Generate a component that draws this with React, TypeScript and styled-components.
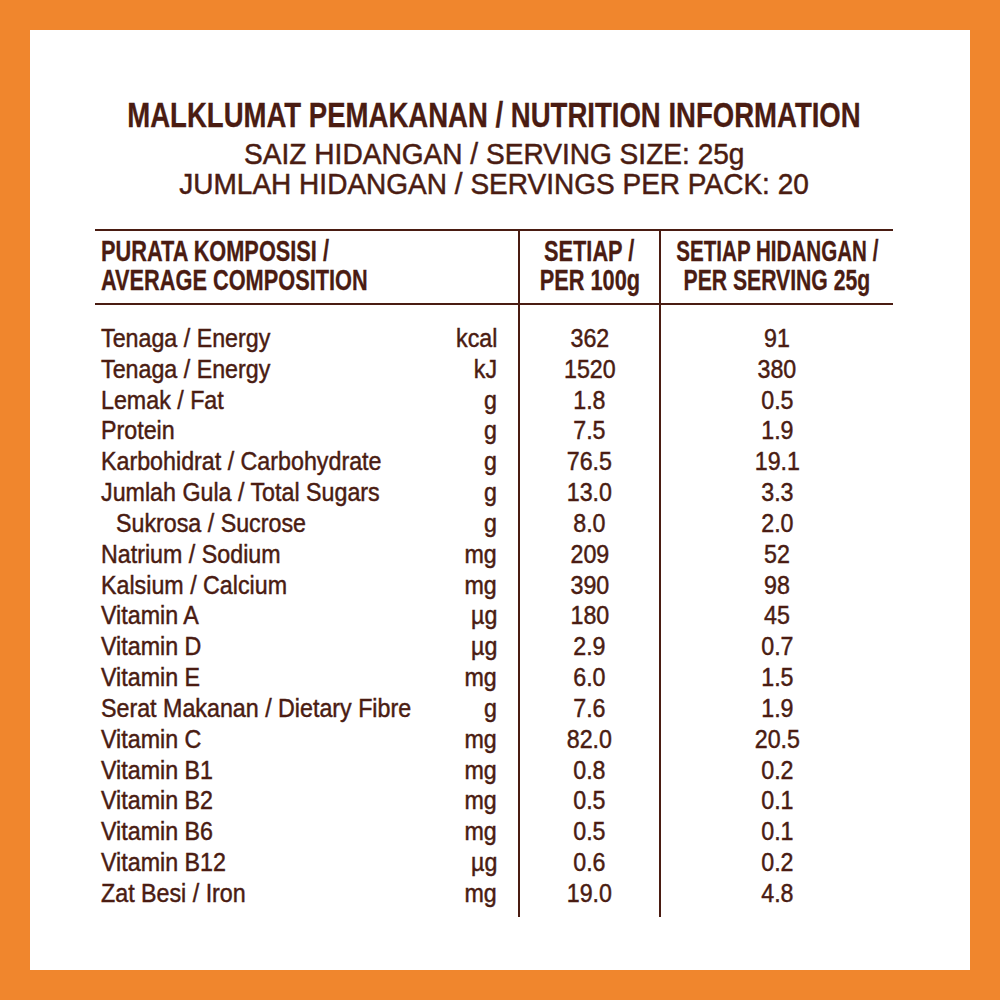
import React from 'react';
import styled, { createGlobalStyle } from 'styled-components';

// --- Global ---

const BROWN = '#4a1c12';

const GlobalStyle = createGlobalStyle`
  html, body {
    margin: 0;
    padding: 0;
  }
  body {
    font-family: "Liberation Sans", Arial, sans-serif;
    color: ${BROWN};
  }
`;

// --- Styled Components ---

const Frame = styled.div`
  width: 1000px;
  height: 1000px;
  box-sizing: border-box;
  padding: 30px;
  background: #f0862d;
`;

const Panel = styled.div`
  height: 100%;
  background: #ffffff;
  padding: 65px 0 0 65px;
  box-sizing: border-box;
  overflow: hidden;
`;

const Content = styled.div`
  width: 798px;
`;

// the label face is a condensed grotesque; squeeze Liberation Sans to match it
const Squeeze = styled.span<{ $s: number; $origin?: string }>`
  display: inline-block;
  white-space: nowrap;
  transform: scaleX(${p => p.$s});
  transform-origin: ${p => p.$origin ?? 'center'};
`;

const Heading = styled.div`
  display: flex;
  flex-direction: column;
  align-items: center;
  margin-bottom: 30px;
`;

const Title = styled.h1`
  margin: 0 0 4px;
  font-size: 35px;
  line-height: 40px;
  font-weight: 700;
  -webkit-text-stroke: 0.3px currentColor;
`;

const SubTitle = styled.div`
  font-size: 30px;
  line-height: 30px;
  -webkit-text-stroke: 0.5px currentColor;
`;

const Table = styled.div`
  border-top: 2px solid ${BROWN};
`;

const Row = styled.div`
  display: grid;
  grid-template-columns: 423px 141px 234px;
`;

const HeadRow = styled(Row)`
  border-bottom: 2px solid ${BROWN};
  font-weight: 700;
  font-size: 29px;
  line-height: 29px;
  -webkit-text-stroke: 0.3px currentColor;
`;

const HeadCell = styled.div<{ $center?: boolean }>`
  display: flex;
  flex-direction: column;
  align-items: ${p => (p.$center ? 'center' : 'flex-start')};
  padding: 6px ${p => (p.$center ? '0' : '6px')} 8px;
  border-left: ${p => (p.$center ? `2px solid ${BROWN}` : 'none')};
`;

const Body = styled(Row)`
  font-size: 25px;
  line-height: 30.83px;
  -webkit-text-stroke: 0.45px currentColor;
`;

const Column = styled.div<{ $line?: boolean }>`
  padding: 18px 0 8px;
  border-left: ${p => (p.$line ? `2px solid ${BROWN}` : 'none')};
  text-align: center;
`;

const LabelRow = styled.div`
  display: flex;
  justify-content: space-between;
  padding: 0 21px 0 6px;
`;

const Label = styled.span<{ $indent?: boolean }>`
  padding-left: ${p => (p.$indent ? '15px' : '0')};
`;

// --- Data ---

type Item = { label: string; unit: string; per100: string; perServing: string; indent?: boolean };

const items: Item[] = [
  { label: 'Tenaga / Energy', unit: 'kcal', per100: '362', perServing: '91' },
  { label: 'Tenaga / Energy', unit: 'kJ', per100: '1520', perServing: '380' },
  { label: 'Lemak / Fat', unit: 'g', per100: '1.8', perServing: '0.5' },
  { label: 'Protein', unit: 'g', per100: '7.5', perServing: '1.9' },
  { label: 'Karbohidrat / Carbohydrate', unit: 'g', per100: '76.5', perServing: '19.1' },
  { label: 'Jumlah Gula / Total Sugars', unit: 'g', per100: '13.0', perServing: '3.3' },
  { label: 'Sukrosa / Sucrose', unit: 'g', per100: '8.0', perServing: '2.0', indent: true },
  { label: 'Natrium / Sodium', unit: 'mg', per100: '209', perServing: '52' },
  { label: 'Kalsium / Calcium', unit: 'mg', per100: '390', perServing: '98' },
  { label: 'Vitamin A', unit: 'µg', per100: '180', perServing: '45' },
  { label: 'Vitamin D', unit: 'µg', per100: '2.9', perServing: '0.7' },
  { label: 'Vitamin E', unit: 'mg', per100: '6.0', perServing: '1.5' },
  { label: 'Serat Makanan / Dietary Fibre', unit: 'g', per100: '7.6', perServing: '1.9' },
  { label: 'Vitamin C', unit: 'mg', per100: '82.0', perServing: '20.5' },
  { label: 'Vitamin B1', unit: 'mg', per100: '0.8', perServing: '0.2' },
  { label: 'Vitamin B2', unit: 'mg', per100: '0.5', perServing: '0.1' },
  { label: 'Vitamin B6', unit: 'mg', per100: '0.5', perServing: '0.1' },
  { label: 'Vitamin B12', unit: 'µg', per100: '0.6', perServing: '0.2' },
  { label: 'Zat Besi / Iron', unit: 'mg', per100: '19.0', perServing: '4.8' },
];

const BODY_S = 0.93;
const HEAD_S = 0.75;

// --- Component ---

export default function App() {
  return (
    <>
      <GlobalStyle />
      <Frame>
        <Panel>
          <Content>
            <Heading>
              <Title>
                <Squeeze $s={0.787}>MALKLUMAT PEMAKANAN / NUTRITION INFORMATION</Squeeze>
              </Title>
              <SubTitle>
                <Squeeze $s={0.936}>SAIZ HIDANGAN / SERVING SIZE: 25g</Squeeze>
              </SubTitle>
              <SubTitle>
                <Squeeze $s={0.934}>JUMLAH HIDANGAN / SERVINGS PER PACK: 20</Squeeze>
              </SubTitle>
            </Heading>

            <Table>
              <HeadRow>
                <HeadCell>
                  <Squeeze $s={HEAD_S} $origin="left">PURATA KOMPOSISI /</Squeeze>
                  <Squeeze $s={HEAD_S} $origin="left">AVERAGE COMPOSITION</Squeeze>
                </HeadCell>
                <HeadCell $center>
                  <Squeeze $s={HEAD_S}>SETIAP /</Squeeze>
                  <Squeeze $s={HEAD_S}>PER 100g</Squeeze>
                </HeadCell>
                <HeadCell $center>
                  <Squeeze $s={0.71}>SETIAP HIDANGAN /</Squeeze>
                  <Squeeze $s={0.73}>PER SERVING 25g</Squeeze>
                </HeadCell>
              </HeadRow>

              <Body>
                <Column>
                  {items.map((it, i) => (
                    <LabelRow key={i}>
                      <Label $indent={it.indent}>
                        <Squeeze $s={BODY_S} $origin="left">{it.label}</Squeeze>
                      </Label>
                      <Squeeze $s={BODY_S} $origin="right">{it.unit}</Squeeze>
                    </LabelRow>
                  ))}
                </Column>
                <Column $line>
                  {items.map((it, i) => (
                    <div key={i}>
                      <Squeeze $s={BODY_S}>{it.per100}</Squeeze>
                    </div>
                  ))}
                </Column>
                <Column $line>
                  {items.map((it, i) => (
                    <div key={i}>
                      <Squeeze $s={BODY_S}>{it.perServing}</Squeeze>
                    </div>
                  ))}
                </Column>
              </Body>
            </Table>
          </Content>
        </Panel>
      </Frame>
    </>
  );
}
